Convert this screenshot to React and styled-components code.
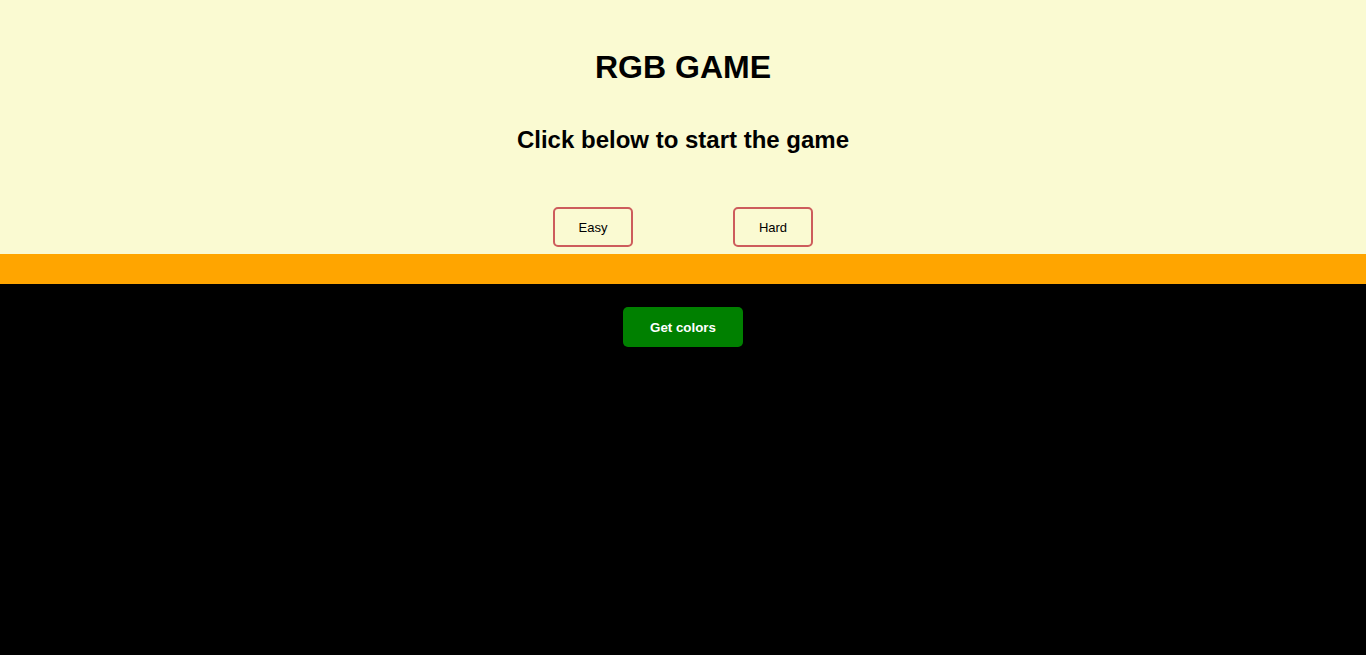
import React from 'react'
import styled, { createGlobalStyle } from 'styled-components'

const GlobalStyle = createGlobalStyle`
  body {
    margin: 0;
    background: #000;
    font-family: 'Liberation Sans', Arial, sans-serif;
  }
`;

const App = () => {
  return (
    <>
      <GlobalStyle />
      <Header>
        <Title>RGB GAME</Title>
        <Subtitle>Click below to start the game</Subtitle>
        <ModeRow>
          <ModeButton>Easy</ModeButton>
          <ModeButton>Hard</ModeButton>
        </ModeRow>
      </Header>
      <Stripe />
      <Board>
        <GetButton>Get colors</GetButton>
      </Board>
    </>
  )
}

export default App;

const Header = styled.header`
  background: #fafad2;
  padding: 49px 0 7px;
  text-align: center;
`;

const Title = styled.h1`
  margin: 0;
  font-size: 32px;
  line-height: 37px;
  font-weight: bold;
  color: #000;
`;

const Subtitle = styled.h2`
  margin: 40px 0 0;
  font-size: 24px;
  line-height: 28px;
  font-weight: bold;
  color: #000;
`;

const ModeRow = styled.div`
  margin-top: 53px;
  display: flex;
  justify-content: center;
  gap: 100px;
`;

const ModeButton = styled.button`
  width: 80px;
  height: 40px;
  background: transparent;
  border: 2px solid indianred;
  border-radius: 5px;
  font-family: 'Liberation Sans', Arial, sans-serif;
  font-size: 13px;
  color: #000;
  cursor: pointer;
`;

const Stripe = styled.div`
  height: 30px;
  background: orange;
`;

const Board = styled.main`
  background: #000;
  min-height: 371px;
  padding-top: 23px;
  box-sizing: border-box;
  display: flex;
  justify-content: center;
  align-items: flex-start;
`;

const GetButton = styled.button`
  width: 120px;
  height: 40px;
  background: green;
  color: #fff;
  border: none;
  border-radius: 5px;
  font-family: 'Liberation Sans', Arial, sans-serif;
  font-size: 13.33px;
  font-weight: bold;
  cursor: pointer;
`;
